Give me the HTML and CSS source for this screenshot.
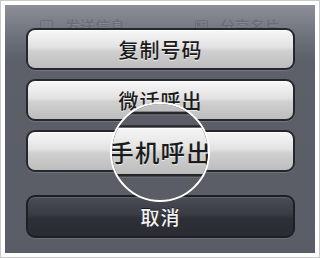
FILE: index.html
```html
<!DOCTYPE html>
<html lang="zh-CN">
<head>
    <meta charset="UTF-8">
    <title>呼出选项</title>
    <link rel="stylesheet" href="styles.css">
</head>
<body>
    <div class="frame">
        <div class="panel">
            <div class="sheet">
                <div class="header">
                    <div class="action">
                        <svg class="action-icon" width="13" height="11" viewBox="0 0 13 11"><rect x="0.5" y="0.5" width="12" height="8" rx="1" fill="none" stroke="currentColor"/><path d="M3 8.5 L3 10.5 L6 8.5" fill="none" stroke="currentColor"/></svg>
                        <span>发送信息</span>
                    </div>
                    <div class="action">
                        <svg class="action-icon" width="13" height="11" viewBox="0 0 13 11"><rect x="0.5" y="0.5" width="12" height="10" rx="1" fill="none" stroke="currentColor"/><rect x="2" y="2.5" width="3.5" height="4" fill="currentColor"/><path d="M7 3.5 H11 M7 6 H11 M2 8.5 H11" stroke="currentColor"/></svg>
                        <span>分享名片</span>
                    </div>
                </div>
                <div class="btn">复制号码</div>
                <div class="btn">微话呼出</div>
                <div class="btn">手机呼出</div>
                <div class="btn btn-cancel">取消</div>
            </div>

            <div class="lens">
                <div class="lens-view">
                    <div class="sheet">
                        <div class="header"></div>
                        <div class="btn">复制号码</div>
                        <div class="btn">微话呼出</div>
                        <div class="btn">手机呼出</div>
                        <div class="btn btn-cancel">取消</div>
                    </div>
                </div>
            </div>
        </div>
    </div>
</body>
</html>
```

FILE: styles.css
```css
body {
    margin: 0;
    font-family: "Noto Sans CJK SC", "Noto Sans", sans-serif;
}
.frame {
    width: 320px;
    height: 258px;
    box-sizing: border-box;
    border: 1px solid #c9c9c9;
    padding: 4px;
    background: #fff;
}
.panel {
    position: relative;
    height: 248px;
    background: linear-gradient(#8d8f98 0, #74777f 25px, #5d6069 55px, #5a5d66 100%);
    overflow: hidden;
}
.sheet {
    display: flex;
    flex-direction: column;
    padding: 0 20px 0 21px;
}
.header {
    display: flex;
    height: 23px;
    margin-right: -20px;
    margin-left: -21px;
}
.action {
    flex: 1;
    display: flex;
    justify-content: center;
    align-items: center;
    gap: 12px;
    padding-top: 20px;
    height: 0;
    font-size: 15px;
    font-weight: 500;
    color: #6b6e77;
    text-shadow: 0 1px 0 rgba(255, 255, 255, 0.1);
}
.action-icon {
    color: #6b6e77;
}
.btn {
    position: relative;
    height: 42px;
    box-sizing: border-box;
    margin-bottom: 9px;
    border: 2px solid #25272d;
    border-radius: 9px;
    background: linear-gradient(#f7f7f7 0, #e2e2e2 45%, #d0d0d0 55%, #bdbdbd 100%);
    box-shadow: inset 0 1px 0 #fff, 0 1px 0 rgba(255, 255, 255, 0.15);
    display: flex;
    align-items: center;
    justify-content: center;
    font-size: 20px;
    font-weight: 500;
    letter-spacing: 1px;
    color: #1b1b1b;
    text-shadow: 0 1px 0 rgba(255, 255, 255, 0.7);
}
.btn-cancel {
    margin-top: 14px;
    height: 43px;
    border-color: #1e1f24;
    background: linear-gradient(#4b4d56 0, #3a3c44 45%, #2e3037 55%, #2a2c33 100%);
    box-shadow: inset 0 1px 0 rgba(255, 255, 255, 0.12), 0 1px 0 rgba(255, 255, 255, 0.12);
    font-size: 19px;
    color: #f2f2f2;
    text-shadow: 0 -1px 0 rgba(0, 0, 0, 0.6);
}
.lens {
    position: absolute;
    left: 105px;
    top: 97px;
    width: 100px;
    height: 100px;
    box-sizing: border-box;
    border: 2px solid #fff;
    border-radius: 50%;
    overflow: hidden;
    background: #5a5d66;
}
.lens-view {
    position: absolute;
    left: -107px;
    top: -99px;
    width: 310px;
    height: 248px;
    transform-origin: 155px 147px;
    transform: scale(1.22);
}
```
